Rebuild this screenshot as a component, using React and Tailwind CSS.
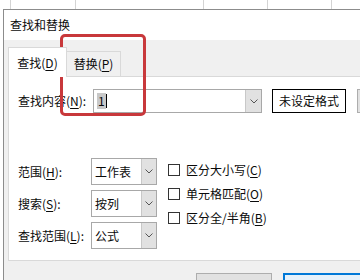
import React from "react";

const U = ({ children }) => <span className="underline underline-offset-2 decoration-1">{children}</span>;

const Chevron = () => (
  <svg width="8" height="5" viewBox="0 0 8 5">
    <path d="M0.5 0.5 L4 4 L7.5 0.5" fill="none" stroke="#555" strokeWidth="1" />
  </svg>
);

const Select = ({ value }) => (
  <div className="flex h-[27px] w-[66px] shrink-0 border border-[#a8a8a8] bg-white">
    <div className="flex flex-1 items-center pl-[3px]">{value}</div>
    <div className="flex w-[15px] items-center justify-center border-l border-[#c8c8c8] bg-[#e1e1e1]">
      <Chevron />
    </div>
  </div>
);

const Check = ({ children }) => (
  <div className="flex h-[24px] items-center whitespace-nowrap">
    <div className="h-[12px] w-[12px] shrink-0 border border-[#333] bg-white" />
    <span className="ml-[6px]">{children}</span>
  </div>
);

export default function App() {
  const fields = [
    { label: <>范围(<U>H</U>):</>, value: "工作表" },
    { label: <>搜索(<U>S</U>):</>, value: "按列" },
    { label: <>查找范围(<U>L</U>):</>, value: "公式" },
  ];

  return (
    <div className="relative h-[280px] w-[360px] overflow-hidden bg-white font-['Noto_Sans_CJK_SC',sans-serif] text-[12px] leading-none text-[#0a0a0a]">
      {/* sheet grid behind the dialog */}
      <div className="flex h-[9px]">
        <div className="w-[11px] border-r border-[#d4d4d4]" />
        <div className="w-[65px] border-r border-[#d4d4d4]" />
        <div className="w-[128px] border-r border-[#d4d4d4]" />
        <div className="w-[64px] border-r border-[#d4d4d4]" />
        <div className="w-[64px] border-r border-[#d4d4d4]" />
        <div className="flex-1" />
      </div>

      <div className="flex">
        <div className="w-[3px] shrink-0" />
        <div className="min-w-0 flex-1 border-l border-t border-[#8c8c8c]">
          {/* title bar */}
          <div className="flex h-[30px] items-center bg-white pl-[6px]">查找和替换</div>

          <div className="h-[260px] bg-[#f0f0f0] pl-[4px]">
            {/* tabs */}
            <div className="relative z-10 flex h-[36px] items-end">
              <div className="-mb-px flex h-[30px] w-[59px] shrink-0 items-center justify-center border border-b-0 border-[#d9d9d9] bg-white">
                查找(<U>D</U>)
              </div>
              <div className="flex h-[25px] w-[54px] shrink-0 items-center justify-center border border-b-0 border-l-0 border-[#d9d9d9] bg-[#f0f0f0]">
                替换(<U>P</U>)
              </div>
            </div>

            {/* panel */}
            <div className="h-[185px] border border-r-0 border-[#d9d9d9] bg-white pl-[9px] pt-[12px]">
              <div className="flex h-[24px] items-center">
                <div className="w-[75px] shrink-0 whitespace-nowrap">查找内容(<U>N</U>):</div>
                <div className="flex h-[24px] w-[169px] shrink-0 border border-[#a8a8a8]">
                  <div className="flex flex-1 items-center pl-[3px]">
                    <span className="bg-[#c8c8c8] px-[1px] py-[2px]">1</span>
                    <span className="h-[14px] w-px bg-black" />
                  </div>
                  <div className="flex w-[16px] items-center justify-center border-l border-[#c8c8c8] bg-[#e1e1e1]">
                    <Chevron />
                  </div>
                </div>
                <div className="ml-[10px] flex h-[24px] w-[74px] shrink-0 items-center justify-center border border-black bg-white">
                  未设定格式
                </div>
                <div className="ml-[11px] h-[24px] w-[60px] shrink-0 border border-[#adadad] bg-[#e1e1e1]" />
              </div>

              <div className="mt-[45px] flex items-start">
                <div className="flex shrink-0 flex-col gap-[5px]">
                  {fields.map((f, i) => (
                    <div key={i} className="flex h-[27px] items-center">
                      <div className="w-[73px] shrink-0 whitespace-nowrap">{f.label}</div>
                      <Select value={f.value} />
                    </div>
                  ))}
                </div>
                <div className="ml-[11px] flex shrink-0 flex-col">
                  <Check>区分大小写(<U>C</U>)</Check>
                  <Check>单元格匹配(<U>O</U>)</Check>
                  <Check>区分全/半角(<U>B</U>)</Check>
                </div>
              </div>
            </div>

            {/* bottom buttons, only their tops are in view */}
            <div className="mt-[12px] flex">
              <div className="ml-[188px] h-[24px] w-[76px] shrink-0 border border-[#adadad] bg-[#e1e1e1]" />
              <div className="ml-[11px] h-[24px] w-[84px] shrink-0 border-2 border-[#0078d7] bg-[#e5f1fb]" />
            </div>
          </div>
        </div>
      </div>

      {/* red annotation box */}
      <div className="absolute left-[60px] top-[34px] h-[82px] w-[86px] rounded-[5px] border-[3px] border-[#c8383b]" />
    </div>
  );
}
